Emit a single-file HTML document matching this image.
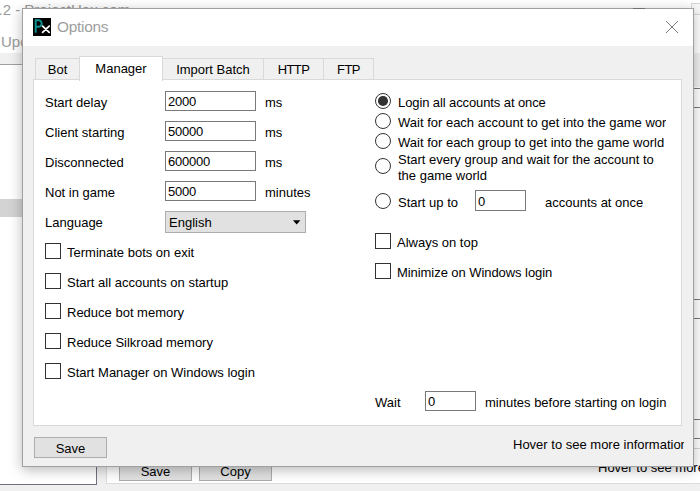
<!DOCTYPE html>
<html><head><meta charset="utf-8">
<style>
*{margin:0;padding:0;box-sizing:border-box}
html,body{width:700px;height:491px;overflow:hidden;background:#fff;font-family:"Liberation Sans",sans-serif;font-size:13px;color:#000}
.a{position:absolute;white-space:nowrap}
.t{position:absolute;white-space:nowrap;line-height:15px;font-size:13px}
.cb{position:absolute;width:16px;height:16px;border:1px solid #333;background:#fff}
.rb{position:absolute;width:16px;height:16px;border:1.2px solid #333;border-radius:50%;background:#fff}
.tb{position:absolute;border:1px solid #7a7a7a;background:#fff;height:20px}
.tab{position:absolute;top:58px;height:22px;border:1px solid #d9d9d9;border-bottom:none;background:#f0f0f0;text-align:center;line-height:22px}
</style></head><body>
<!-- background window -->
<div class="a" style="left:0;top:0;width:700px;height:491px;background:#f0f0f0"></div>
<div class="a" style="left:0;top:0;width:700px;height:53px;background:#fff"></div>
<div class="a" style="left:691px;top:3px;width:20px;height:12px;border:1px solid #d8d8d8;background:#f8f8f8"></div>
<div class="a" style="left:-1.5px;top:-0.5px;font-size:15px;color:#9a9a9a;line-height:20px">.2 - ProjectHax.com</div>
<div class="a" style="left:1px;top:32px;font-size:15px;color:#9a9a9a;line-height:20px">Upd</div>
<div class="a" style="left:0;top:64px;width:97px;height:421px;border-top:1px solid #a0a0a0;border-right:1px solid #707080;border-bottom:1px solid #707080;background:#fff"></div>
<div class="a" style="left:0;top:199px;width:22px;height:18px;background:#d3d3d3"></div>
<div class="a" style="left:693px;top:87px;width:7px;height:397px;background:#fff"></div>
<div class="a" style="left:693px;top:88px;width:7px;height:1px;background:#7a7a7a"></div>
<div class="a" style="left:693px;top:107px;width:7px;height:1px;background:#7a7a7a"></div>
<div class="a" style="left:693px;top:299px;width:7px;height:1px;background:#7a7a7a"></div>
<div class="a" style="left:693px;top:318px;width:7px;height:1px;background:#7a7a7a"></div>
<div class="a" style="left:693px;top:419px;width:7px;height:1px;background:#7a7a7a"></div>
<div class="a" style="left:693px;top:438px;width:7px;height:1px;background:#7a7a7a"></div>
<div class="a" style="left:106px;top:440px;width:594px;height:44px;border-left:1px solid #dcdcdc;border-bottom:1px solid #dcdcdc;background:#fff"></div>
<div class="a" style="left:119px;top:440px;width:73px;height:41px;border:1px solid #adadad;background:#e1e1e1;text-align:center;line-height:22px;padding-top:20px">Save</div>
<div class="a" style="left:199px;top:440px;width:73px;height:41px;border:1px solid #adadad;background:#e1e1e1;text-align:center;line-height:22px;padding-top:20px">Copy</div>
<div class="a" style="left:598px;top:459.5px;line-height:16px">Hover to see more</div>
<div class="a" style="left:693px;top:448px;width:7px;height:1px;background:#d4d4d4"></div>

<!-- dialog -->
<div class="a" style="left:22px;top:8px;width:672px;height:459px;border:1px solid #a0a0a0;background:#f0f0f0;box-shadow:0 3px 12px rgba(0,0,0,0.28)"></div>
<div class="a" style="left:23px;top:9px;width:670px;height:37px;background:#fff"></div>
<div class="a" style="left:633px;top:8px;width:12px;height:1px;background:#707070"></div>
<!-- icon -->
<div class="a" style="left:33px;top:18px;width:18px;height:18px;background:#000"></div>
<svg class="a" style="left:33px;top:18px" width="18" height="18" viewBox="0 0 18 18">
<path d="M2.7 14.8V2.2H5.4A3.3 3.3 0 0 1 5.4 8.8H2.7" fill="none" stroke="#0a9494" stroke-width="1.9"/>
<path d="M9.6 8.2L16.2 14.4M16.2 8.2L9.6 14.4" stroke="#fff" stroke-width="1.8" stroke-linecap="round"/>
</svg>
<div class="a" style="left:57px;top:18px;font-size:15.4px;letter-spacing:-0.25px;color:#9e9e9e;line-height:18px">Options</div>
<svg class="a" style="left:665px;top:20px" width="14" height="14" viewBox="0 0 14 14"><path d="M1 1L13 13M13 1L1 13" stroke="#7a7a7a" stroke-width="1"/></svg>

<!-- tabs -->
<div class="tab" style="left:35px;width:45px">Bot</div>
<div class="tab" style="left:162px;width:102px">Import Batch</div>
<div class="tab" style="left:263px;width:61px;letter-spacing:-0.6px">HTTP</div>
<div class="tab" style="left:323px;width:51px;letter-spacing:-0.6px">FTP</div>
<!-- panel -->
<div class="a" style="left:33px;top:79px;width:649px;height:347px;border:1px solid #d9d9d9;background:#fff"></div>
<div class="tab" style="left:79px;top:56px;width:84px;height:25px;background:#fff;line-height:24px;z-index:2">Manager</div>

<!-- left column -->
<div class="t" style="left:45px;top:95px">Start delay</div>
<div class="t" style="left:45px;top:125px">Client starting</div>
<div class="t" style="left:45px;top:155px">Disconnected</div>
<div class="t" style="left:45px;top:185px">Not in game</div>
<div class="t" style="left:45px;top:215px">Language</div>

<div class="tb" style="left:165px;top:91px;width:91px">
<div class="t" style="left:2px;top:2px;letter-spacing:-0.25px">2000</div></div>
<div class="tb" style="left:165px;top:121px;width:91px">
<div class="t" style="left:2px;top:2px;letter-spacing:-0.25px">50000</div></div>
<div class="tb" style="left:165px;top:151px;width:91px">
<div class="t" style="left:2px;top:2px;letter-spacing:-0.25px">600000</div></div>
<div class="tb" style="left:165px;top:181px;width:91px">
<div class="t" style="left:2px;top:2px;letter-spacing:-0.25px">5000</div></div>
<div class="t" style="left:265px;top:95px">ms</div>
<div class="t" style="left:265px;top:125px">ms</div>
<div class="t" style="left:265px;top:155px">ms</div>
<div class="t" style="left:265px;top:185px">minutes</div>

<div class="a" style="left:165px;top:211px;width:141px;height:22px;border:1px solid #adadad;background:#e1e1e1"></div>
<div class="t" style="left:169px;top:215px">English</div>
<svg class="a" style="left:293px;top:220px" width="8" height="5" viewBox="0 0 8 5"><path d="M0 0.2H7.4L3.7 4.4Z" fill="#000"/></svg>

<div class="cb" style="left:45px;top:243px"></div>
<div class="t" style="left:67px;top:245px">Terminate bots on exit</div>
<div class="cb" style="left:45px;top:273px"></div>
<div class="t" style="left:67px;top:275px">Start all accounts on startup</div>
<div class="cb" style="left:45px;top:303px"></div>
<div class="t" style="left:67px;top:305px">Reduce bot memory</div>
<div class="cb" style="left:45px;top:333px"></div>
<div class="t" style="left:67px;top:335px">Reduce Silkroad memory</div>
<div class="cb" style="left:45px;top:363px"></div>
<div class="t" style="left:67px;top:365px">Start Manager on Windows login</div>

<!-- right column -->
<div class="rb" style="left:375px;top:93px"></div>
<div class="a" style="left:378.2px;top:96.2px;width:9.6px;height:9.6px;border-radius:50%;background:#333"></div>
<div class="t" style="left:398px;top:95px;letter-spacing:-0.1px">Login all accounts at once</div>
<div class="rb" style="left:375px;top:113px"></div>
<div class="t" style="left:398px;top:115px;width:268px;overflow:hidden">Wait for each account to get into the game world</div>
<div class="rb" style="left:375px;top:133px"></div>
<div class="t" style="left:398px;top:135px;width:268px;overflow:hidden">Wait for each group to get into the game world</div>
<div class="rb" style="left:375px;top:158px"></div>
<div class="t" style="left:398px;top:152px">Start every group and wait for the account to</div>
<div class="t" style="left:398px;top:168px">the game world</div>
<div class="rb" style="left:375px;top:193px"></div>
<div class="t" style="left:398px;top:195px">Start up to</div>
<div class="tb" style="left:475px;top:190px;width:51px;height:21px">
<div class="t" style="left:2px;top:3px">0</div></div>
<div class="t" style="left:545px;top:195px">accounts at once</div>

<div class="cb" style="left:375px;top:233px"></div>
<div class="t" style="left:397px;top:235px">Always on top</div>
<div class="cb" style="left:375px;top:263px"></div>
<div class="t" style="left:397px;top:265px;letter-spacing:-0.06px">Minimize on Windows login</div>

<div class="t" style="left:375px;top:395px">Wait</div>
<div class="tb" style="left:425px;top:391px;width:51px">
<div class="t" style="left:2px;top:2px">0</div></div>
<div class="t" style="left:485px;top:395px">minutes before starting on login</div>

<div class="a" style="left:34px;top:437px;width:73px;height:21px;border:1px solid #adadad;background:#e1e1e1;text-align:center;line-height:21px">Save</div>
<div class="a" style="left:513px;top:437px;width:171px;overflow:hidden;line-height:16px">Hover to see more information</div>
</body></html>
